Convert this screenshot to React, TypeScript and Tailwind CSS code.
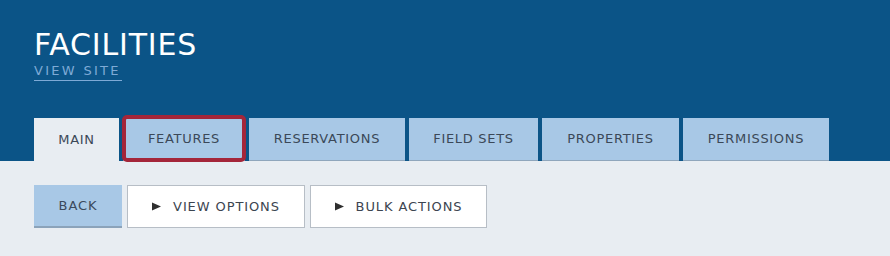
import React from "react";

const tabs: { label: string; w: string; active?: boolean; focus?: boolean }[] = [
  { label: "MAIN", w: "w-[85px]", active: true },
  { label: "FEATURES", w: "w-[122px]", focus: true },
  { label: "RESERVATIONS", w: "w-[156px]" },
  { label: "FIELD SETS", w: "w-[129px]" },
  { label: "PROPERTIES", w: "w-[137px]" },
  { label: "PERMISSIONS", w: "w-[146px]" },
];

function Tri() {
  return (
    <svg width="9" height="9" viewBox="0 0 9 9" className="shrink-0">
      <polygon points="0,0.5 9,4.5 0,8.5" fill="#2f2f2f" />
    </svg>
  );
}

export default function App() {
  return (
    <div
      className="w-[890px] h-[256px] bg-[#e8edf2] overflow-hidden"
      style={{ fontFamily: '"DejaVu Sans", "Liberation Sans", sans-serif' }}
    >
      <div className="bg-[#0b5487] h-[161px] pl-[34px] pt-[30px] flex flex-col">
        <div className="text-white text-[30px] leading-[30px] tracking-[0.8px]">FACILITIES</div>
        <div className="mt-[4px] block w-fit text-[#7eaad6] text-[13px] leading-[13px] tracking-[2.3px] pb-[3px] pr-[1px] border-b border-[#7eaad6]">
          VIEW SITE
        </div>
        <div className="mt-auto flex gap-[4px] items-end">
          {tabs.map((t) => (
            <div
              key={t.label}
              className={
                "relative h-[43px] flex items-center justify-center text-[13px] tracking-[0.7px] text-[#3b4858] " +
                t.w +
                (t.active
                  ? " bg-[#e8edf2]"
                  : " bg-[#a8c8e6] border-b border-[#8fa6bc]")
              }
            >
              {t.label}
              {t.focus && (
                <span className="absolute -left-[1px] -right-[1px] -top-[3px] -bottom-[2px] border-[4px] border-[#a4263a] rounded-[5px]" />
              )}
            </div>
          ))}
        </div>
      </div>
      <div className="pl-[34px] pt-[24px] flex gap-[5px]">
        <div className="w-[88px] h-[43px] bg-[#a8c8e6] border-b-2 border-[#8ba3ba] flex items-center justify-center text-[13px] tracking-[0.9px] text-[#3b4a5c]">
          BACK
        </div>
        <div className="w-[178px] h-[43px] bg-white border border-[#b7bec6] flex items-center justify-center gap-[12px] text-[13px] tracking-[0.9px] text-[#3c4550]">
          <Tri />
          <span>VIEW OPTIONS</span>
        </div>
        <div className="w-[177px] h-[43px] bg-white border border-[#b7bec6] flex items-center justify-center gap-[12px] text-[13px] tracking-[0.9px] text-[#3c4550]">
          <Tri />
          <span>BULK ACTIONS</span>
        </div>
      </div>
    </div>
  );
}
